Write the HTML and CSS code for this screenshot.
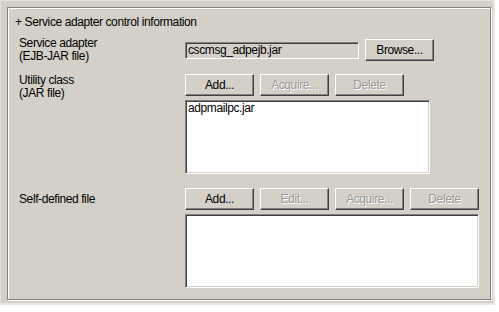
FILE: index.html
```html
<!DOCTYPE html>
<html>
<head>
  <meta charset="UTF-8">
  <title>Service adapter control information</title>
  <link rel="stylesheet" href="styles.css">
</head>
<body>
  <div class="window">
    <div class="group">
      <div class="group-title">+ Service adapter control information</div>

      <!-- EJB-JAR file -->
      <div class="section">
        <div class="label">Service adapter<br>(EJB-JAR file)</div>
        <div class="row">
          <div class="field">cscmsg_adpejb.jar</div>
          <button type="button" class="btn">Browse...</button>
        </div>
      </div>

      <!-- Utility class -->
      <div class="section">
        <div class="label label-top">Utility class<br>(JAR file)</div>
        <div class="controls">
          <div class="row">
            <button type="button" class="btn">Add...</button>
            <button type="button" class="btn" disabled>Acquire...</button>
            <button type="button" class="btn" disabled>Delete</button>
          </div>
          <div class="list list-short">
            <div class="list-item">adpmailpc.jar</div>
          </div>
        </div>
      </div>

      <!-- Self-defined file -->
      <div class="section">
        <div class="label label-mid">Self-defined file</div>
        <div class="controls">
          <div class="row">
            <button type="button" class="btn">Add...</button>
            <button type="button" class="btn" disabled>Edit...</button>
            <button type="button" class="btn" disabled>Acquire...</button>
            <button type="button" class="btn" disabled>Delete</button>
          </div>
          <div class="list list-wide"></div>
        </div>
      </div>
    </div>
  </div>
</body>
</html>
```

FILE: styles.css
```css
body {
  margin: 0;
  background: #ffffff;
  font-family: "Liberation Sans", Arial, sans-serif;
  font-size: 12px;
  letter-spacing: -0.4px;
  color: #000;
}
.window {
  width: 495px;
  height: 305px;
  box-sizing: border-box;
  padding: 6px 0 0 6px;
  background: #d4d0c8;
  border-top: 1px solid #e4e2dd;
  border-left: 1px solid #e4e2dd;
  border-right: 2px solid #e9e7e3;
  border-bottom: 2px solid #e9e7e3;
}
.group {
  width: 484px;
  height: 293px;
  box-sizing: border-box;
  border: 1px solid #808080;
  box-shadow: 1px 1px 0 #ffffff, inset 1px 1px 0 #ffffff;
  padding: 8px 0 0 11px;
}
.group-title {
  line-height: 13px;
  margin-left: -4px;
}
.section {
  display: flex;
  margin-top: 13px;
}
.section:nth-of-type(2) {
  margin-top: 10px;
}
.section:last-child {
  margin-top: 14px;
}
.label {
  width: 166px;
  height: 22px;
  flex-shrink: 0;
  line-height: 13px;
  margin-top: -2px;
}
.label-top {
  margin-top: 0;
}
.label-mid {
  line-height: 22px;
  margin-top: 0;
}
.controls {
  display: flex;
  flex-direction: column;
}
.row {
  display: flex;
  align-items: center;
  gap: 6px;
  height: 22px;
}
.btn {
  width: 69px;
  height: 22px;
  padding: 0;
  background: #d4d0c8;
  border: 1px solid;
  border-color: #ffffff #404040 #404040 #ffffff;
  box-shadow: inset -1px -1px 0 #808080;
  font-family: "Liberation Sans", Arial, sans-serif;
  font-size: 12px;
  letter-spacing: -0.4px;
  color: #000;
}
.btn:disabled {
  color: #9a9894;
  text-shadow: 1px 1px 0 #ffffff;
}
.field {
  width: 174px;
  height: 17px;
  box-sizing: border-box;
  padding-left: 2px;
  line-height: 15px;
  background: #d4d0c8;
  border: 1px solid;
  border-color: #808080 #ffffff #ffffff #808080;
  box-shadow: inset 1px 1px 0 #404040;
  white-space: nowrap;
  overflow: hidden;
}
.list {
  margin-top: 4px;
  height: 74px;
  box-sizing: border-box;
  background: #ffffff;
  border: 1px solid;
  border-color: #808080 #ffffff #ffffff #808080;
  box-shadow: inset 1px 1px 0 #404040, inset -1px -1px 0 #d4d0c8;
  padding: 1px 0 0 2px;
}
.list-short {
  width: 245px;
}
.list-wide {
  width: 294px;
}
.list-item {
  line-height: 13px;
}
```
